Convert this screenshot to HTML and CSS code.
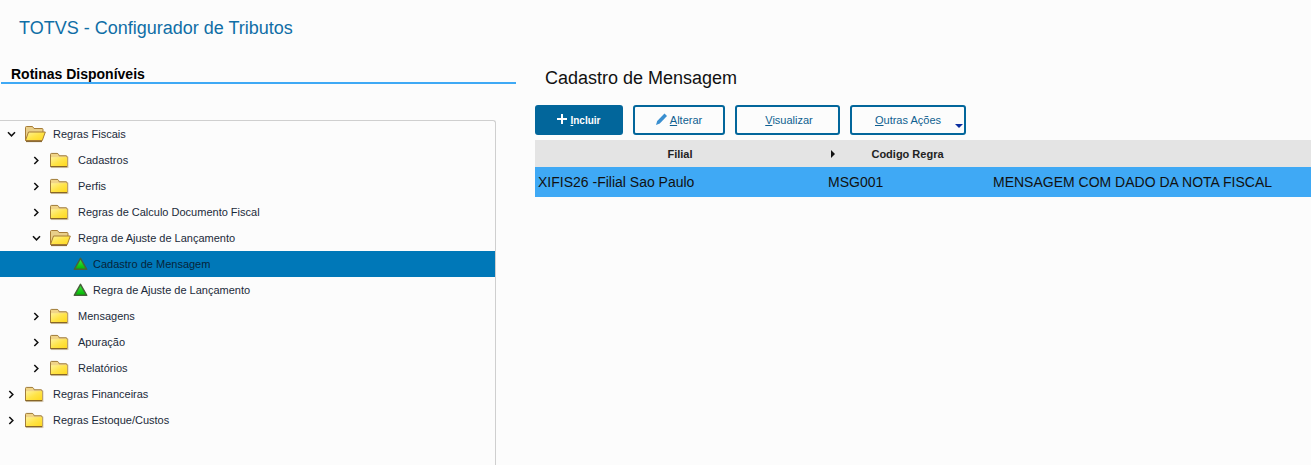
FILE: index.html
```html
<!DOCTYPE html>
<html lang="pt-BR">
<head>
<meta charset="utf-8">
<title>TOTVS - Configurador de Tributos</title>
<link rel="stylesheet" href="styles.css">
</head>
<body>
<svg class="defs" width="0" height="0" aria-hidden="true">
  <defs>
    <linearGradient id="fy" x1="0" y1="0" x2="1" y2="1">
      <stop offset="0" stop-color="#fff29a"/><stop offset=".5" stop-color="#ffe448"/><stop offset="1" stop-color="#ffd81e"/>
    </linearGradient>
    <linearGradient id="gt" x1="0" y1="0" x2="0" y2="1">
      <stop offset="0" stop-color="#40f040"/><stop offset="1" stop-color="#00b400"/>
    </linearGradient>
    <symbol id="closed" viewBox="1 0 20 18">
      <path d="M2 17h18.500V5H2z" fill="#b9a27a" opacity=".55"/>
      <path d="M1.500 15.500V2.500q0-1 1-1h6q1 0 1.500 1l.7 1.500h7.300q1 0 1 1v10.500z" fill="#f0d488" stroke="#9a7430"/>
      <path d="M2 5.500h17v9.500H2z" fill="url(#fy)"/>
      <path d="M1.500 15.500h17.500" stroke="#7d5c24"/>
    </symbol>
    <symbol id="open" viewBox="1 0 22 18">
      <path d="M1.500 15.500V2.500q0-1 1-1h6l1.500 2h8q1 0 1 1v3" fill="#e9cf8a" stroke="#a67c37"/>
      <path d="M1.500 15.500l3-8.500h16.800l-3 8.500z" fill="url(#fy)" stroke="#a67c37"/>
      <path d="M2 16.500h16" stroke="#8a6a35" stroke-width="1.200"/>
    </symbol>
    <symbol id="tri" viewBox="0 0 15 14">
      <path d="M7.500 1.400L13.700 12.300H1.300z" fill="url(#gt)" stroke="#47623a" stroke-width="1.500" stroke-linejoin="round"/>
    </symbol>
    <symbol id="cr" viewBox="0 0 8 10"><path d="M1.500 1l4 4-4 4" fill="none" stroke="#111" stroke-width="1.800"/></symbol>
    <symbol id="cd" viewBox="0 0 10 8"><path d="M1 1.500l4 4 4-4" fill="none" stroke="#111" stroke-width="1.800"/></symbol>
  </defs>
</svg>
<header class="app-header">TOTVS - Configurador de Tributos</header>
<main class="layout">
  <aside class="side">
    <h2 class="side-title">Rotinas Disponíveis</h2>
    <ul class="tree">
      <li class="node lvl0"><svg class="chev-d"><use href="#cd"/></svg><svg class="fold-o"><use href="#open"/></svg><span>Regras Fiscais</span></li>
      <li class="node lvl1"><svg class="chev"><use href="#cr"/></svg><svg class="fold"><use href="#closed"/></svg><span>Cadastros</span></li>
      <li class="node lvl1"><svg class="chev"><use href="#cr"/></svg><svg class="fold"><use href="#closed"/></svg><span>Perfis</span></li>
      <li class="node lvl1"><svg class="chev"><use href="#cr"/></svg><svg class="fold"><use href="#closed"/></svg><span>Regras de Calculo Documento Fiscal</span></li>
      <li class="node lvl1"><svg class="chev-d"><use href="#cd"/></svg><svg class="fold-o"><use href="#open"/></svg><span>Regra de Ajuste de Lançamento</span></li>
      <li class="node lvl2 selected"><svg class="leaf"><use href="#tri"/></svg><span>Cadastro de Mensagem</span></li>
      <li class="node lvl2"><svg class="leaf"><use href="#tri"/></svg><span>Regra de Ajuste de Lançamento</span></li>
      <li class="node lvl1"><svg class="chev"><use href="#cr"/></svg><svg class="fold"><use href="#closed"/></svg><span>Mensagens</span></li>
      <li class="node lvl1"><svg class="chev"><use href="#cr"/></svg><svg class="fold"><use href="#closed"/></svg><span>Apuração</span></li>
      <li class="node lvl1"><svg class="chev"><use href="#cr"/></svg><svg class="fold"><use href="#closed"/></svg><span>Relatórios</span></li>
      <li class="node lvl0"><svg class="chev"><use href="#cr"/></svg><svg class="fold"><use href="#closed"/></svg><span>Regras Financeiras</span></li>
      <li class="node lvl0"><svg class="chev"><use href="#cr"/></svg><svg class="fold"><use href="#closed"/></svg><span>Regras Estoque/Custos</span></li>
    </ul>
  </aside>
  <section class="content">
    <h1 class="content-title">Cadastro de Mensagem</h1>
    <div class="toolbar">
      <button class="btn primary w-incluir"><svg class="plus" viewBox="0 0 10 10"><path d="M5 0v10M0 5h10" stroke="#fff" stroke-width="2"/></svg><span><u>I</u>ncluir</span></button>
      <button class="btn w-alterar"><svg class="pen" viewBox="0 0 11 12"><path d="M0 12l1.200-4L8.500 .6 11 3 3.800 10.500z" fill="#3a8fd0"/></svg><span><u>A</u>lterar</span></button>
      <button class="btn w-visualizar"><span><u>V</u>isualizar</span></button>
      <button class="btn w-outras"><span><u>O</u>utras Ações</span><i class="drop"></i></button>
    </div>
    <div class="grid">
      <div class="cell head">Filial</div>
      <div class="cell head head-sort"><i class="sort"></i>Codigo Regra</div>
      <div class="cell head"></div>
      <div class="cell row c1">XIFIS26 -Filial Sao Paulo</div>
      <div class="cell row c2">MSG001</div>
      <div class="cell row c3">MENSAGEM COM DADO DA NOTA FISCAL</div>
    </div>
  </section>
</main>
</body>
</html>
```
FILE: styles.css
```css
* { box-sizing: border-box; }
html, body { margin: 0; height: 465px; overflow: hidden; }
body { background: #fcfcfc; font-family: "Liberation Sans", Arial, sans-serif; color: #111; }
.defs { display: block; height: 0; }
.app-header { height: 66px; padding: 17px 0 0 19px; font-size: 18px; line-height: 22px; color: #0f6ea6; }
.layout { display: flex; height: 399px; }
.side { width: 516px; flex: none; }
.side-title { margin: 0 0 0 1px; height: 18px; padding-left: 10px; font-size: 14px; line-height: 16px; font-weight: bold; color: #000; border-bottom: 2px solid #3fa9f5; }
.tree { list-style: none; margin: 36px 0 0; padding: 0; width: 496px; height: 345px; border: 1px solid #cfcfcf; border-left: 0; border-bottom: 0; border-top-right-radius: 3px; }
.node { display: flex; align-items: center; height: 26px; font-size: 11px; color: #1b2a3a; }
.node span { display: block; }
.lvl0 { padding-left: 8px; }
.lvl1 { padding-left: 33px; }
.lvl2 { padding-left: 73px; }
.selected { background: #0078b8; color: #06243a; }
.chev { width: 7px; height: 9px; margin-right: 10px; flex: none; }
.chev-d { width: 9px; height: 7px; margin-left: -1px; margin-right: 9px; flex: none; }
.fold { width: 19px; height: 17px; margin-right: 9px; flex: none; }
.fold-o { width: 22px; height: 18px; margin-right: 6px; flex: none; }
.leaf { width: 15px; height: 14px; margin-right: 5px; flex: none; }
.content { flex: 1; padding: 3px 0 0 19px; min-width: 0; }
.content-title { margin: 0 0 0 10px; height: 36px; font-size: 18px; line-height: 18px; font-weight: normal; color: #111; }
.toolbar { display: flex; height: 30px; }
.btn { display: flex; align-items: center; justify-content: center; gap: 3px; height: 30px; padding: 0; background: #fcfcfc; border: 2px solid #02669b; border-radius: 3px; font: 11px "Liberation Sans", Arial, sans-serif; color: #0f5f90; position: relative; }
.primary { background: #02669b; color: #fff; font-weight: bold; font-size: 10px; }
.w-incluir { width: 88px; margin-right: 10px; }
.w-alterar { width: 92px; margin-right: 10px; }
.w-visualizar { width: 105px; margin-right: 10px; padding-left: 3px; }
.w-outras { width: 116px; }
.plus { width: 10px; height: 10px; margin-top: -2px; }
.pen { width: 11px; height: 12px; margin-top: -2px; }
.drop { position: absolute; right: 1px; bottom: 5px; border-left: 4px solid transparent; border-right: 4px solid transparent; border-top: 4px solid #0a2ea0; }
.grid { display: grid; grid-template-columns: 290px 165px 1fr; margin-top: 5px; }
.cell { display: flex; align-items: center; }
.head { height: 27px; background: #e4e4e4; justify-content: center; font-size: 11px; font-weight: bold; color: #222; }
.head-sort { position: relative; }
.sort { position: absolute; left: 6px; top: 10px; border-top: 4px solid transparent; border-bottom: 4px solid transparent; border-left: 4px solid #111; }
.row { height: 30px; background: #3fa9f5; font-size: 14px; color: #111; padding-left: 3px; }
```
